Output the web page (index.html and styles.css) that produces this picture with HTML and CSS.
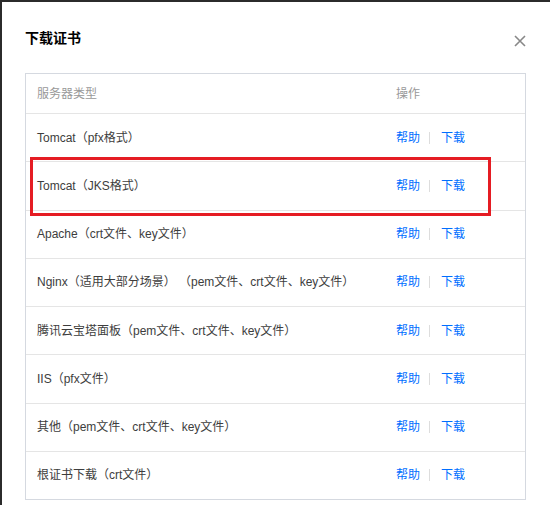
FILE: index.html
```html
<!DOCTYPE html>
<html lang="zh-CN">
<head>
<meta charset="utf-8">
<title>下载证书</title>
<link rel="stylesheet" href="styles.css">
</head>
<body>
<div class="dialog">
  <div class="dialog-head">
    <h3 class="dialog-title">下载证书</h3>
    <svg class="close" width="12" height="12" viewBox="0 0 12 12" aria-label="关闭">
      <path d="M1 1 L11 11 M11 1 L1 11" stroke="#888" stroke-width="1.6" fill="none"/>
    </svg>
  </div>
  <div class="table">
    <div class="row head"><div class="cell">服务器类型</div><div class="cell">操作</div></div>
    <div class="row"><div class="cell">Tomcat（pfx格式）</div><div class="cell ops"><a>帮助</a><span class="sep"></span><a>下载</a></div></div>
    <div class="row"><div class="cell">Tomcat（JKS格式）</div><div class="cell ops"><a>帮助</a><span class="sep"></span><a>下载</a></div></div>
    <div class="row"><div class="cell">Apache（crt文件、key文件）</div><div class="cell ops"><a>帮助</a><span class="sep"></span><a>下载</a></div></div>
    <div class="row"><div class="cell">Nginx（适用大部分场景）&nbsp;（pem文件、crt文件、key文件）</div><div class="cell ops"><a>帮助</a><span class="sep"></span><a>下载</a></div></div>
    <div class="row"><div class="cell">腾讯云宝塔面板（pem文件、crt文件、key文件）</div><div class="cell ops"><a>帮助</a><span class="sep"></span><a>下载</a></div></div>
    <div class="row"><div class="cell">IIS（pfx文件）</div><div class="cell ops"><a>帮助</a><span class="sep"></span><a>下载</a></div></div>
    <div class="row"><div class="cell">其他（pem文件、crt文件、key文件）</div><div class="cell ops"><a>帮助</a><span class="sep"></span><a>下载</a></div></div>
    <div class="row last"><div class="cell">根证书下载（crt文件）</div><div class="cell ops"><a>帮助</a><span class="sep"></span><a>下载</a></div></div>
  </div>
</div>
<div class="highlight"></div>
</body>
</html>
```
FILE: styles.css
```css
html, body {
  margin: 0;
  padding: 0;
  height: 100%;
  overflow: hidden;
}
body {
  background: #2b2b2b;
  font-family: "Liberation Sans", "Noto Sans CJK SC", sans-serif;
  font-size: 12px;
  color: #3d3d3d;
  position: relative;
}
.dialog {
  margin: 2px 0 0 2px;
  width: 548px;
  height: 520px;
  box-sizing: border-box;
  background: #fff;
  padding: 26px 24px 0 23px;
}
.dialog-head {
  display: flex;
  justify-content: space-between;
  align-items: flex-start;
  height: 45px;
}
.dialog-title {
  margin: 0;
  font-size: 14px;
  font-weight: bold;
  line-height: 20px;
  color: #000;
}
.close {
  margin-top: 7px;
  display: block;
}
.table {
  border: 1px solid #d5d9e0;
}
.row {
  display: grid;
  grid-template-columns: 1fr 140px;
  align-items: center;
  height: 48.25px;
  box-sizing: border-box;
  border-bottom: 1px solid #e5e5e5;
}
.row.head {
  height: 40px;
  color: #999;
}
.row.last {
  border-bottom: none;
  height: 47.25px;
}
.cell {
  padding-left: 11px;
  line-height: 18px;
  white-space: nowrap;
}
.ops {
  display: flex;
  align-items: center;
}
.ops a {
  color: #006eff;
  cursor: pointer;
}
.sep {
  display: inline-block;
  width: 1px;
  height: 12px;
  background: #ddd;
  margin: 0 11px 0 9px;
}
.highlight {
  position: absolute;
  left: 30px;
  top: 157px;
  width: 455px;
  height: 53px;
  border: 3px solid #e51c23;
}
```
